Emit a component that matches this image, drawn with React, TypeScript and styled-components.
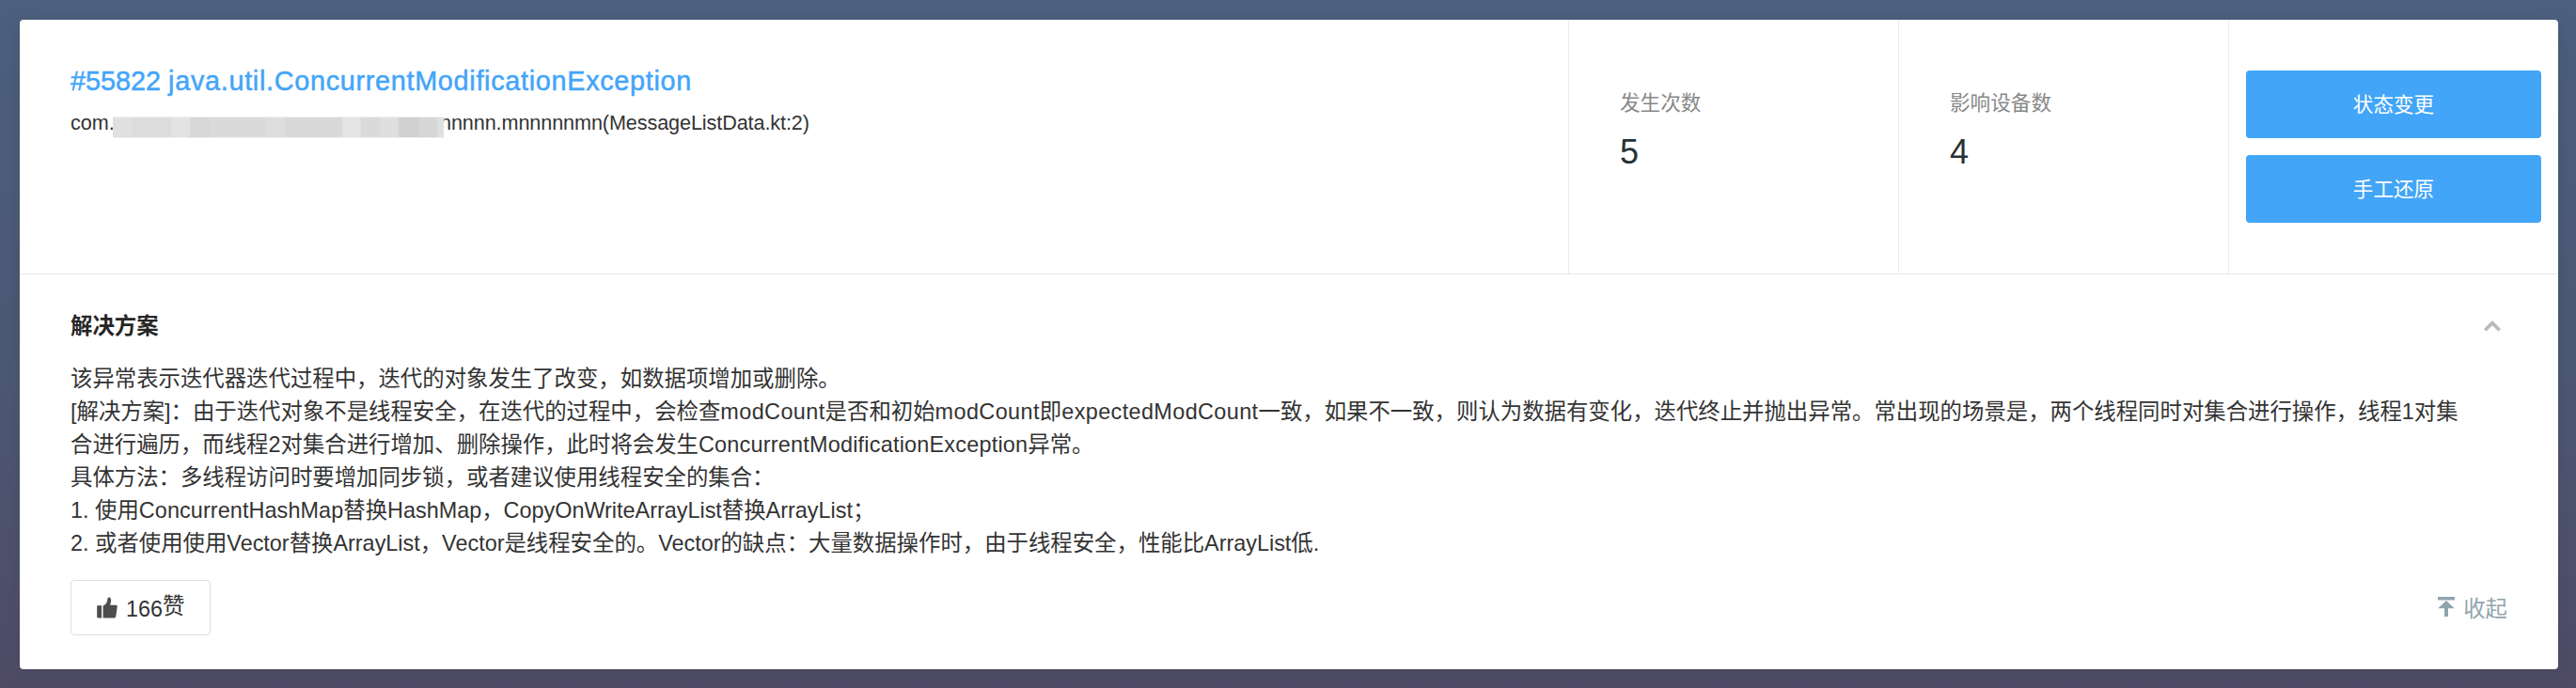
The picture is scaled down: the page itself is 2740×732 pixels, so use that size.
import React from 'react';
import styled, { createGlobalStyle } from 'styled-components';

const Global = createGlobalStyle`
  * { box-sizing: border-box; }
  body { margin: 0; }
`;

const Page = styled.div`
  height: 732px;
  padding: 21px 19px 20px 21px;
  background: linear-gradient(180deg, #4c6080 0%, #4d5875 55%, #4f4b67 100%);
  font-family: "Liberation Sans", "Noto Sans CJK SC", sans-serif;
  color: #333;
`;

const Card = styled.main`
  display: flex;
  flex-direction: column;
  height: 691px;
  background: #fff;
  border-radius: 4px;
  box-shadow: 0 4px 18px rgba(60, 70, 75, 0.4);
`;

const Header = styled.header`
  display: grid;
  grid-template-columns: 1fr 351px 351px 351px;
  height: 271px;
  border-bottom: 1px solid #e6e8e9;
`;

const Summary = styled.div`
  padding: 46px 54px 0;
`;

const Title = styled.h1`
  margin: 0;
  font-size: 28.8px;
  line-height: 38px;
  font-weight: 400;
  color: #43a5f8;
  -webkit-text-stroke: 0.5px #43a5f8;
  white-space: nowrap;
`;

const Latin = styled.span<{ $spacing: number }>`
  letter-spacing: ${(p) => p.$spacing}px;
`;

const Location = styled.div`
  display: flex;
  align-items: center;
  margin-top: 11px;
  height: 30px;
  font-size: 21.6px;
  line-height: 30px;
  white-space: nowrap;
`;

const Redaction = styled.span`
  position: relative;
  display: block;
  width: 352px;
  height: 21px;
  margin: 9px -4px 0 -1.8px;
  background: linear-gradient(
    90deg,
    #e0e0e0 0 20px,
    #dcdcdc 21px 61px,
    #e3e3e3 63px 81px,
    #d7d7d7 83px 102px,
    #dadada 104px 162px,
    #dedede 164px 182px,
    #d8d8d8 184px 243px,
    #e4e4e4 245px 263px,
    #dadada 265px 283px,
    #dfdfdf 285px 303px,
    #d1d1d1 305px 324px,
    #d6d6d6 326px 344px,
    #e0e0e0 346px 352px
  );
  box-shadow: 0 -1px 0 #f0f0f0, 0 1px 0 #f2f2f2;
`;

const Stat = styled.div`
  padding: 72px 54px 0;
  border-left: 1px solid #e9ebec;
`;

const StatLabel = styled.div`
  font-size: 21.6px;
  line-height: 34px;
  color: #888;
`;

const StatValue = styled.div`
  margin-top: 14px;
  font-size: 36px;
  line-height: 42px;
  color: #263238;
`;

const Actions = styled.div`
  display: flex;
  flex-direction: column;
  gap: 18px;
  padding: 54px 18px 0;
  border-left: 1px solid #e9ebec;
`;

const ActionButton = styled.button`
  height: 72px;
  border: 0;
  border-radius: 4px;
  background: #42a5f7;
  color: #fff;
  font: 21.6px/70px "Liberation Sans", "Noto Sans CJK SC", sans-serif;
  padding: 2px 0 0;
`;

const Solution = styled.section`
  display: flex;
  flex-direction: column;
  flex: 1;
  padding: 36px 54px 0;
`;

const SolutionHead = styled.div`
  display: flex;
  justify-content: space-between;
  align-items: center;
  height: 38px;
  padding-right: 7px;
`;

const SolutionTitle = styled.h2`
  margin: 0;
  font-size: 23.4px;
  line-height: 38px;
  font-weight: 700;
  color: #262626;
`;

const Body = styled.div`
  margin-top: 20px;
  font-size: 23.4px;
  line-height: 35.1px;
`;

const Line = styled.div`
  height: 35.1px;
  white-space: nowrap;
`;

const Footer = styled.footer`
  display: flex;
  justify-content: space-between;
  align-items: center;
  margin-top: 20.4px;
  height: 59px;
`;

const LikeButton = styled.button`
  display: flex;
  align-items: center;
  width: 149px;
  height: 59px;
  padding: 0 0 0 27px;
  border: 1px solid #dcdfe1;
  border-radius: 4px;
  background: #fff;
  color: #333;
  font: 23.4px/57px "Liberation Sans", "Noto Sans CJK SC", sans-serif;
`;

const LikeCount = styled.span`
  margin: 4px 0 0 9px;
`;

const LikeLabel = styled.span`
  margin-top: -2px;
`;

const Collapse = styled.a`
  display: flex;
  align-items: center;
  gap: 8px;
  font-size: 23.4px;
  line-height: 38px;
  color: #90a4ae;
`;

const CollapseLabel = styled.span`
  padding-top: 3px;
`;

const App = () => (
  <>
    <Global />
    <Page>
      <Card>
        <Header>
          <Summary>
            <Title>
              #55822 <Latin $spacing={0.7}>java.util.ConcurrentModificationException</Latin>
            </Title>
            <Location>
              <span>com.</span>
              <Redaction />
              <Latin $spacing={-0.09}>nnnnn.mnnnnnmn(MessageListData.kt:2)</Latin>
            </Location>
          </Summary>
          <Stat>
            <StatLabel>发生次数</StatLabel>
            <StatValue>5</StatValue>
          </Stat>
          <Stat>
            <StatLabel>影响设备数</StatLabel>
            <StatValue>4</StatValue>
          </Stat>
          <Actions>
            <ActionButton>状态变更</ActionButton>
            <ActionButton>手工还原</ActionButton>
          </Actions>
        </Header>
        <Solution>
          <SolutionHead>
            <SolutionTitle>解决方案</SolutionTitle>
            <svg width="18" height="12" viewBox="0 0 18 12" fill="none" stroke="#b8b8b8" strokeWidth="3.6">
              <path d="M1.3 10.2 9 2.6l7.7 7.6" />
            </svg>
          </SolutionHead>
          <Body>
            <Line>该异常表示迭代器迭代过程中，迭代的对象发生了改变，如数据项增加或删除。</Line>
            <Line>
              [解决方案]：由于迭代对象不是线程安全，在迭代的过程中，会检查<Latin $spacing={0.42}>modCount</Latin>是否和初始
              <Latin $spacing={0.42}>modCount</Latin>即<Latin $spacing={0.4}>expectedModCount</Latin>
              一致，如果不一致，则认为数据有变化，迭代终止并抛出异常。常出现的场景是，两个线程同时对集合进行操作，线程1对集
            </Line>
            <Line>
              合进行遍历，而线程2对集合进行增加、删除操作，此时将会发生
              <Latin $spacing={0.23}>ConcurrentModificationException</Latin>异常。
            </Line>
            <Line>具体方法：多线程访问时要增加同步锁，或者建议使用线程安全的集合：</Line>
            <Line>
              1. 使用<Latin $spacing={0.1}>ConcurrentHashMap</Latin>替换HashMap，CopyOnWriteArrayList替换ArrayList；
            </Line>
            <Line>2. 或者使用使用Vector替换ArrayList，Vector是线程安全的。Vector的缺点：大量数据操作时，由于线程安全，性能比ArrayList低.</Line>
          </Body>
          <Footer>
            <LikeButton>
              <svg width="22" height="23" viewBox="0 0 22 23" fill="#4d4d4d">
                <path d="M.2 9.3h4.9v13.2H1.1L.2 21.6zM6.6 9.5c2.7-1 4.3-3.3 4.6-5.8C11.4 1.7 11.8.5 12.8.5c2.4 0 3 3.3 1.3 8.3h6.2c1.1 0 1.5.7 1.4 1.8l-1.4 10c-.2 1.3-.9 1.9-2 1.9H6.6z" />
              </svg>
              <LikeCount>166</LikeCount>
              <LikeLabel>赞</LikeLabel>
            </LikeButton>
            <Collapse>
              <svg width="20" height="22" viewBox="0 0 20 22" fill="#90a4ae">
                <path d="M1 0h18v3.4H1zM10 4l8.8 8.3H12V21H8v-8.7H1.2z" />
              </svg>
              <CollapseLabel>收起</CollapseLabel>
            </Collapse>
          </Footer>
        </Solution>
      </Card>
    </Page>
  </>
);

export default App;
